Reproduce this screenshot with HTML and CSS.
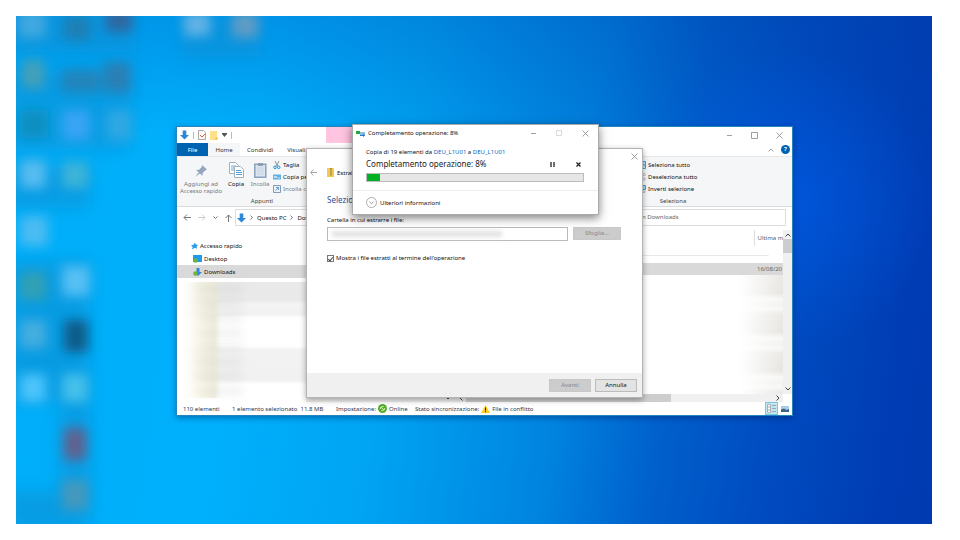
FILE: index.html
```html
<!DOCTYPE html>
<html lang="it">
<head>
<meta charset="utf-8">
<title>Desktop</title>
<link rel="stylesheet" href="styles.css">
</head>
<body>
<main class="desktop">
  <svg class="blobs" width="300" height="508" viewBox="0 0 300 508" aria-hidden="true">
    <defs>
      <filter id="soft" x="-20%" y="-20%" width="140%" height="140%"><feGaussianBlur stdDeviation="6"/></filter>
      <filter id="wide" x="-20%" y="-20%" width="140%" height="140%"><feGaussianBlur stdDeviation="9"/></filter>
    </defs>
    <g filter="url(#wide)" fill="#1090d4" opacity=".6">
      <rect x="-10" y="-10" width="130" height="46"/>
      <rect x="-10" y="54" width="128" height="34"/>
      <rect x="-10" y="90" width="124" height="44"/>
      <rect x="-10" y="150" width="84" height="42"/>
      <rect x="-10" y="245" width="84" height="140"/>
      <rect x="-10" y="475" width="84" height="40"/>
      <rect x="165" y="5" width="80" height="36"/>
      <rect x="44" y="385" width="30" height="100"/>
    </g>
    <g filter="url(#soft)">
      <rect x="2" y="-6" width="28" height="28" fill="#3fa8e0"/>
      <rect x="48" y="0" width="26" height="24" fill="#1d7fb4"/>
      <rect x="90" y="-8" width="26" height="24" fill="#2f68a0"/>
      <rect x="168" y="-4" width="26" height="24" fill="#62b2e4"/>
      <rect x="216" y="-4" width="26" height="26" fill="#5f9cc4"/>
      <rect x="6" y="44" width="22" height="28" fill="#45a0b8"/>
      <rect x="46" y="54" width="38" height="22" fill="#2384ba"/>
      <rect x="88" y="46" width="26" height="30" fill="#2a7fb4"/>
      <rect x="4" y="94" width="28" height="28" fill="#0d90c0"/>
      <rect x="46" y="94" width="28" height="30" fill="#38a4f4"/>
      <rect x="90" y="94" width="26" height="30" fill="#2ea8e4"/>
      <rect x="4" y="144" width="26" height="28" fill="#56bcf0"/>
      <rect x="46" y="146" width="26" height="26" fill="#3cb4d8"/>
      <rect x="4" y="200" width="28" height="30" fill="#4cbcf2"/>
      <rect x="4" y="256" width="26" height="28" fill="#32a0b4"/>
      <rect x="46" y="250" width="28" height="30" fill="#56c0f4"/>
      <rect x="4" y="304" width="26" height="28" fill="#44aee0"/>
      <rect x="48" y="304" width="24" height="32" fill="#0c5c88"/>
      <rect x="4" y="358" width="26" height="28" fill="#4cc4fc"/>
      <rect x="46" y="358" width="26" height="28" fill="#44c0ea"/>
      <rect x="48" y="412" width="22" height="32" fill="#62608c"/>
      <rect x="46" y="464" width="26" height="30" fill="#4498bc"/>
    </g>
  </svg>

  <section class="window explorer" aria-label="Downloads">
    <header class="titlebar">
      <div class="quick">
        <svg width="9" height="10" viewBox="0 0 10 10"><path d="M3 0h4v5h3L5 10 0 5h3z" fill="#2f88d6"/></svg>
        <i class="bar"></i>
        <svg width="8" height="10" viewBox="0 0 8 10"><path d="M.5.5h5l2 2v7h-7z" fill="#fafafa" stroke="#aaa"/><path d="M2 5l2 2 3-3" fill="none" stroke="#e06030"/></svg>
        <svg width="8" height="10" viewBox="0 0 8 10"><path d="M0 1h7v7h1v2H0z" fill="#ffe08a"/><path d="M7 7v2H5" fill="none" stroke="#f0bc40"/></svg>
        <svg width="5" height="4" viewBox="0 0 5 4"><path d="M0 0h5v1L2.500 4 0 1z" fill="#555"/></svg>
        <i class="bar"></i>
      </div>
      <div class="context-tab"></div>
      <div class="controls">
        <button aria-label="Riduci"><svg width="7" height="7" viewBox="0 0 7 7"><path d="M1 3.500h5"/></svg></button>
        <button aria-label="Ingrandisci"><svg width="7" height="7" viewBox="0 0 7 7"><path d="M.5.5h6v6h-6z"/></svg></button>
        <button aria-label="Chiudi"><svg width="7" height="7" viewBox="0 0 7 7"><path d="M.5.5l6 6M6.500.5l-6 6"/></svg></button>
      </div>
    </header>
    <nav class="tabs">
      <button class="file">File</button>
      <button class="active">Home</button>
      <button>Condividi</button>
      <button>Visualizza</button>
      <span class="help">
        <svg width="6" height="4" viewBox="0 0 6 4"><path d="M.5 3.500L3 1l2.500 2.500" fill="none" stroke="#888" stroke-width=".8"/></svg>
        <button class="round" aria-label="Guida">?</button>
      </span>
    </nav>
    <div class="ribbon">
      <div class="group clip">
        <div class="tools">
          <button class="big dim pin"><svg width="14" height="14" viewBox="0 0 14 14"><path d="M8 1l5 4.500-1.500.7-2.700 2.600-.3 3L5.800 9.500 1.200 13l3.500-4.700L2.200 6l3-.3L7.700 3z" fill="#93a6bd"/></svg><span>Aggiungi ad<br>Accesso rapido</span></button>
          <button class="big"><svg width="15" height="16" viewBox="0 0 15 16"><path d="M.5.5h6l3 3v8h-9z" fill="#fff" stroke="#a3afbb"/><path d="M2 4h5M2 6h5M2 8h5" stroke="#67a9d9"/><path d="M5.500 4.500h6l3 3v8h-9z" fill="#fff" stroke="#a3afbb"/><path d="M7 8.500h5M7 10.500h6M7 12.500h6" stroke="#4c9bd2"/></svg><span>Copia</span></button>
          <button class="big dim"><svg width="13" height="16" viewBox="0 0 13 16"><path d="M.8 2.200h11v13H.8z" fill="#dce5f0" stroke="#8ba2bd" stroke-width="1.500"/><path d="M4 1h5v3H4z" fill="#8d9fb3"/><path d="M3 6h7M3 8h7M3 10h7M3 12h7" stroke="#bac9da" stroke-width=".6"/></svg><span>Incolla</span></button>
          <ul class="small">
            <li><button><svg width="8" height="8" viewBox="0 0 8 8"><path d="M2 0l2.500 5M6 0L3.500 5" stroke="#777" stroke-width=".8"/><circle cx="2" cy="6.300" r="1.300" fill="none" stroke="#1f8fd8"/><circle cx="5.700" cy="6.300" r="1.300" fill="none" stroke="#1f8fd8"/></svg>Taglia</button></li>
            <li><button><svg width="8" height="8" viewBox="0 0 8 8"><path d="M0 1.500h8v5H0z" fill="#5fb0e4"/><path d="M1 3l1 2 1-2 1 2M5 5h2" fill="none" stroke="#fff" stroke-width=".7"/></svg>Copia percorso</button></li>
            <li><button class="dim"><svg width="8" height="8" viewBox="0 0 8 8"><path d="M.5.5h7v7h-7z" fill="#eaf1f8" stroke="#859bb5"/><path d="M2.500 5.500l3-3M3 2.500h2.500V5" fill="none" stroke="#4d87c4" stroke-width=".8"/></svg>Incolla collegamento</button></li>
          </ul>
        </div>
        <p>Appunti</p>
      </div>
      <div class="group select">
        <ul class="small">
          <li><button><svg width="8" height="8" viewBox="0 0 8 8"><path d="M.5.5h7v7h-7zM0 4h8M4 0v8" fill="#b6e0f7" stroke="#3fa0dc"/></svg>Seleziona tutto</button></li>
          <li><button><svg width="8" height="8" viewBox="0 0 8 8"><path d="M1 .5h2v2H1zM5 .5h2v2H5zM1 5h2v2H1zM5 5h2v2H5z" fill="#fff" stroke="#aaa" stroke-width=".7"/></svg>Deseleziona tutto</button></li>
          <li><button><svg width="8" height="8" viewBox="0 0 8 8"><path d="M4 .5h3.500v4H4z" fill="#9ed6f5" stroke="#3fa0dc"/><path d="M5 6h2v1.500H5z" fill="#fff" stroke="#aaa" stroke-width=".7"/></svg>Inverti selezione</button></li>
        </ul>
        <p>Seleziona</p>
      </div>
    </div>
    <div class="address">
      <svg width="8" height="7" viewBox="0 0 8 7"><path d="M8 3.500H1M4 .5l-3 3 3 3" class="ln"/></svg>
      <svg width="8" height="7" viewBox="0 0 8 7"><path d="M0 3.500h7M4 .5l3 3-3 3" class="ln faint"/></svg>
      <svg width="5" height="4" viewBox="0 0 5 4"><path d="M.5.500l2 2 2-2" class="ln"/></svg>
      <svg width="7" height="8" viewBox="0 0 7 8"><path d="M3.500 8V1M.5 4l3-3 3 3" class="ln"/></svg>
      <div class="crumbs">
        <svg width="9" height="10" viewBox="0 0 10 10"><path d="M3 0h4v5h3L5 10 0 5h3z" fill="#2f88d6"/></svg>
        <svg width="3" height="5" viewBox="0 0 3 5"><path d="M.5.5l2 2-2 2" class="ln"/></svg><a href="#">Questo PC</a><svg width="3" height="5" viewBox="0 0 3 5"><path d="M.5.5l2 2-2 2" class="ln"/></svg><a href="#">Downloads</a>
      </div>
      <div class="search">Cerca in Downloads</div>
    </div>
    <div class="content">
      <aside class="tree">
        <a href="#" class="root"><svg width="7" height="8" viewBox="0 0 8 8"><path d="M4.500 0L5.500 2.200 8 2.500 6.500 4.500 7 7 4.500 6 1 8l1-3L0 3l3-.5z" fill="#2a9be8"/></svg>Accesso rapido</a>
        <a href="#"><svg width="9" height="8" viewBox="0 0 9 8"><path d="M0 0h9v7H0z" fill="#1b9cf0"/><circle cx="2.500" cy="5.500" r="2.300" fill="#6cb33f"/></svg>Desktop</a>
        <a href="#" class="on"><svg width="9" height="8" viewBox="0 0 9 8"><path d="M3.500 0h3v4H9L5 8 1.500 4h2z" fill="#2f88d6"/><circle cx="2.500" cy="5.500" r="2.300" fill="#6cb33f"/></svg>Downloads</a>
        <div class="haze"><i></i><i></i><i></i><i></i><i></i><i></i><i></i><i></i></div>
      </aside>
      <div class="files">
        <table>
          <thead><tr><th></th><th class="date">Ultima m</th></tr></thead>
          <tbody>
            <tr class="gap"><td colspan="2"></td></tr>
            <tr class="on"><td></td><td class="date">16/08/20</td></tr>
          </tbody>
        </table>
        <div class="rowhaze"></div>
        <div class="hscroll">
          <svg class="down" width="6" height="4" viewBox="0 0 6 4"><path d="M.5.500L3 3l2.500-2.500" class="ln dark"/></svg>
          <svg width="4" height="6" viewBox="0 0 4 6"><path d="M3.500.5L1 3l2.500 2.500" class="ln dark"/></svg>
          <i></i>
          <svg width="4" height="6" viewBox="0 0 4 6"><path d="M.5.5L3 3 .5 5.500" class="ln dark"/></svg>
        </div>
      </div>
      <div class="vscroll">
        <svg width="6" height="4" viewBox="0 0 6 4"><path d="M.5 3.500L3 1l2.500 2.500" class="ln dark"/></svg>
        <i></i>
        <svg width="6" height="4" viewBox="0 0 6 4"><path d="M.5.500L3 3l2.500-2.500" class="ln dark"/></svg>
      </div>
    </div>
    <footer class="status">
      <span class="count">110 elementi</span>
      <span class="sel">1 elemento selezionato&nbsp; 11,8 MB</span>
      <span class="net">Impostazione:<svg width="9" height="9" viewBox="0 0 9 9"><circle cx="4.500" cy="4.500" r="4.500" fill="#55ad2e"/><path d="M2.300 5a2.300 2.300 0 0 1 3.500-2.200M6.700 4a2.300 2.300 0 0 1-3.500 2.200M3 3l3 3" fill="none" stroke="#e4f7c8" stroke-width=".9"/></svg>Online</span>
      <span class="sync">Stato sincronizzazione:<svg width="9" height="8" viewBox="0 0 9 8"><path d="M4.500 0L9 8H0z" fill="#ffcf1f"/><path d="M4.500 2.500v3M4.500 6.200v1" stroke="#222"/></svg>File in conflitto</span>
      <span class="views">
        <button class="on" aria-label="Dettagli"><svg width="9" height="9" viewBox="0 0 9 9"><path d="M.5.5h3v8h-3z" fill="#fff" stroke="#999" stroke-width=".7"/><path d="M.5 3h3M.5 6h3M5 1.500h4M5 4.500h4M5 7.500h4" stroke="#8a9aa4" stroke-width=".8"/></svg></button>
        <button aria-label="Icone grandi"><svg width="8" height="6" viewBox="0 0 8 6"><path d="M0 0h8v6H0z" fill="#a7cdec"/><path d="M0 6V3.500l3-1L5.500 4 8 3v3z" fill="#3c6484"/></svg></button>
      </span>
    </footer>
  </section>

  <section class="window wizard" aria-label="Estrai cartelle compresse">
    <header>
      <svg width="7" height="7" viewBox="0 0 7 7"><path d="M7 3.500H1M3.500.500l-3 3 3 3" fill="none" stroke="#aaa"/></svg>
      <svg class="zip" width="7" height="9" viewBox="0 0 7 9"><path d="M0 0h6l1 1v8H0z" fill="#f3c94f"/><path d="M4 0v8" stroke="#7d7460" stroke-width="1.500" stroke-dasharray="1 .6"/></svg>
      <span>Estrai</span>
      <button class="x" aria-label="Chiudi"><svg width="7" height="7" viewBox="0 0 7 7"><path d="M.5.5l6 6M6.500.5l-6 6"/></svg></button>
    </header>
    <div class="form">
      <h1>Selezio</h1>
      <label for="dest">Cartella in cui estrarre i file:</label>
      <div class="row">
        <span class="field"><input id="dest" type="text"><i></i></span>
        <button class="push off" disabled>Sfoglia...</button>
      </div>
      <label class="check"><input type="checkbox" checked>Mostra i file estratti al termine dell'operazione</label>
    </div>
    <footer><button class="push off" disabled>Avanti</button><button class="push">Annulla</button></footer>
  </section>

  <section class="window copy" aria-label="Completamento operazione">
    <header>
      <svg width="9" height="7" viewBox="0 0 9 7"><path d="M0 1h4v3H0z" fill="#22ac3c"/><path d="M4 2h5v4H4z" fill="#8bbce4"/><path d="M4 5h3V3.500L9 5.500 7 7V6H4z" fill="#2378c8"/></svg>
      <span>Completamento operazione: 8%</span>
      <div class="controls">
        <button aria-label="Riduci"><svg width="7" height="7" viewBox="0 0 7 7"><path d="M1 3.500h5"/></svg></button>
        <button class="faded" aria-label="Ingrandisci" disabled><svg width="7" height="7" viewBox="0 0 7 7"><path d="M.5.5h5v5h-5z"/></svg></button>
        <button aria-label="Chiudi"><svg width="7" height="7" viewBox="0 0 7 7"><path d="M.5.5l6 6M6.500.5l-6 6"/></svg></button>
      </div>
    </header>
    <div class="progress">
      <p>Copia di 19 elementi da <a href="#">DEU_L1U01</a> a <a href="#">DEU_L1U01</a></p>
      <div class="line">
        <h2>Completamento operazione: 8%</h2>
        <button aria-label="Pausa"><svg width="5" height="5" viewBox="0 0 5 5"><path d="M1 0v5M4 0v5" stroke="#222" stroke-width="1.300"/></svg></button>
        <button aria-label="Annulla"><svg width="5" height="5" viewBox="0 0 5 5"><path d="M.5.500l4 4M4.500.5l-4 4" stroke="#222" stroke-width="1.300"/></svg></button>
      </div>
      <div class="meter" role="progressbar" aria-valuenow="8"><i></i></div>
    </div>
    <button class="more"><svg width="11" height="11" viewBox="0 0 11 11"><circle cx="5.500" cy="5.500" r="5" fill="#fff" stroke="#999" stroke-width=".8"/><path d="M3.300 4.700l2.200 2 2.200-2" fill="none" stroke="#888" stroke-width=".8"/></svg>Ulteriori informazioni</button>
  </section>
</main>
</body>
</html>
```
FILE: styles.css
```css
* { box-sizing: border-box; }
body { margin: 0; background: #fff; font: 6px/10px "Noto Sans", "Open Sans", sans-serif; color: #111; }
button { font: inherit; color: inherit; background: none; border: 0; padding: 0; margin: 0; white-space: nowrap; }
a { color: inherit; text-decoration: none; }
p, h1, h2, ul { margin: 0; padding: 0; font-weight: 400; }
ul { list-style: none; }
svg { display: block; flex: none; }

.desktop {
  position: relative;
  margin: 16px 28px 16px 16px;
  height: calc(100vh - 32px);
  overflow: hidden;
  background:
    radial-gradient(circle at 84% 36%, rgba(0, 92, 236, .6), rgba(0, 80, 220, 0) 18%),
    linear-gradient(188deg, rgba(0, 60, 170, .42), rgba(0, 80, 200, 0) 36%),
    linear-gradient(98deg, #00aef8 0%, #00b0fc 26%, #00a4f2 42%, #0084e0 60%, #0060cc 71%, #004cc0 82%, #003cb4 95%, #003ab0 100%);
}
.blobs { position: absolute; left: 0; top: 0; }
.window { position: absolute; display: flex; flex-direction: column; background: #fff; }
.ln { fill: none; stroke: #777; stroke-width: 1; }
.faint { stroke: #ccc; }
.dark { stroke: #444; }

.controls { margin-left: auto; display: flex; align-items: center; }
.controls button { width: 26px; display: flex; justify-content: center; }
.controls svg, .x svg { fill: none; stroke: #888; stroke-width: .8; }
.controls .faded { opacity: .4; }

/* File explorer */
.explorer { left: 160px; top: 110px; width: 617px; height: 290px; border: 1px solid #2485be; box-shadow: 0 2px 6px rgba(0, 20, 80, .4); }
.explorer .controls button { width: 25px; }
.titlebar { display: flex; height: 16px; flex: none; }
.quick { display: flex; align-items: center; gap: 4px; width: 149px; padding-left: 3px; }
.bar { width: 1px; height: 7px; background: #bbb; }
.context-tab { width: 60px; background: #ffc4df; }
.tabs { display: flex; height: 13px; flex: none; line-height: 12px; }
.tabs > button { padding: 0 7px; color: #333; }
.tabs .file { width: 31px; background: #0063b1; color: #fff; }
.tabs .active { background: #f5f6f7; width: 32px; padding: 0; }
.help { margin-left: auto; display: flex; align-items: center; gap: 7px; padding-right: 2px; }
.round { width: 9px; height: 9px; line-height: 9px; border-radius: 50%; background: #0063b1; color: #fff; font-weight: 700; }
.ribbon { display: flex; justify-content: space-between; height: 51px; flex: none; background: #f5f6f7; border-top: 1px solid #e6e8ea; border-bottom: 1px solid #dadbdc; }
.group { display: flex; flex-direction: column; justify-content: space-between; padding: 3px 0 0; }
.group p { text-align: center; color: #444; }
.clip { width: 170px; overflow: hidden; }
.tools { display: flex; }
.big { display: flex; flex-direction: column; align-items: center; gap: 3px; line-height: 7px; width: 24px; padding-top: 2px; }
.pin { width: 47px; padding-left: 1px; padding-top: 4px; }
.dim { color: #777; }
.small { display: flex; flex-direction: column; gap: 2px; }
.tools .small { margin-left: 1px; }
.small button { display: flex; align-items: center; gap: 2px; }
.select { width: 154px; }
.select p { width: 64px; padding-left: 6px; }
.address { display: flex; align-items: center; gap: 7px; height: 23px; flex: none; padding: 0 6px 2px 6px; }
.crumbs { display: flex; align-items: center; gap: 4px; height: 17px; flex: 1; border: 1px solid #ddd; padding: 0 1px; margin-left: -4px; }
.search { height: 17px; line-height: 15px; width: 172px; border: 1px solid #ddd; color: #666; padding-left: 8px; }
.content { display: flex; flex: 1; min-height: 0; }
.tree { width: 129px; padding: 9px 0 0; }
.tree a { display: flex; align-items: center; gap: 2px; height: 13px; padding-left: 16px; }
.tree .root { padding-left: 14px; }
.tree .on, tr.on { background: #d9d9d9; }
.haze { margin: 4px 0 0 6px; height: 116px; display: flex; flex-direction: column; justify-content: space-around; background: linear-gradient(90deg, #fff, rgba(248, 245, 224, .7) 18px, rgba(238, 235, 216, .8) 31px, rgba(255, 255, 255, 0) 38px), linear-gradient(180deg, #e9e9e9 0, #e9e9e9 18px, #f4f4f4 22px, #f1f1f1 32px, #fff 36px, #fff 64px, #f2f2f2 68px, #f1f1f1 98px, #fff 102px); }
.haze i { height: 4px; width: 46px; margin-left: 14px; background: #aaa; opacity: .3; filter: blur(4px); }
.files { flex: 1; min-width: 0; display: flex; flex-direction: column; }
table { width: 100%; table-layout: fixed; border-collapse: collapse; }
th, td { padding: 0; font-weight: 400; text-align: left; height: 12px; white-space: nowrap; }
thead th { height: 16px; color: #4d5b70; }
.date { width: 29px; padding-left: 3px; }
th.date { border-left: 1px solid #ddd; }
td.date { color: #666; }
.gap td { height: 17px; background: linear-gradient(#e8e8e8, #e8e8e8) 0 9px / 97% 1px no-repeat; }
.rowhaze { flex: 1; background: linear-gradient(90deg, rgba(255, 255, 255, 1) 91%, rgba(255, 255, 255, 0)), repeating-linear-gradient(180deg, #eae9e6 0, #e6e5e1 18px, #f8f8f7 24px, #f2f1ef 30px, #f8f8f6 34px, #eae9e6 39px); }
.hscroll { display: flex; align-items: center; gap: 3px; height: 8px; background: #f0f0f0; padding: 0 3px 0 139px; }
.down { margin-right: 5px; }
.hscroll i { width: 205px; height: 8px; background: #cdcdcd; margin-right: auto; }
.vscroll { width: 9px; margin-bottom: 8px; background: #f0f0f0; display: flex; flex-direction: column; align-items: center; padding: 3px 0; gap: 2px; }
.vscroll i { width: 9px; height: 14px; background: #cdcdcd; margin-bottom: auto; }
.status { display: flex; align-items: center; height: 13px; flex: none; padding-left: 6px; color: #2a3954; white-space: nowrap; }
.status span { display: flex; align-items: center; gap: 2px; }
.count { width: 49px; }
.sel { width: 104px; }
.net { width: 79px; }
.status .views { margin-left: auto; gap: 3px; padding-right: 3px; }
.views button { display: flex; align-items: center; }
.views .on { width: 13px; height: 13px; justify-content: center; background: #bfe6f2; border: 1px solid #7cc6de; }

/* Extraction wizard */
.wizard { left: 290px; top: 132px; width: 337px; height: 250px; border: 1px solid #b4b4b4; box-shadow: 0 2px 6px rgba(0, 0, 0, .35); }
.wizard header { display: flex; align-items: flex-start; padding: 4px 4px 0 3px; height: 42px; }
.wizard header > span { margin-top: 15px; }
.wizard header > svg { margin-top: 16px; }
.wizard header > .zip { margin: 15px 3px 0 10px; }
.x { margin-left: auto; }
.form { padding: 2px 21px 0 20px; flex: 1; display: flex; flex-direction: column; align-items: stretch; }
.form h1 { font-size: 8px; line-height: 13px; color: #1e4e9c; margin-bottom: 9px; }
.row { display: flex; justify-content: space-between; margin: 2px 0 12px; }
.field { display: flex; position: relative; width: 241px; height: 14px; }
.field input { width: 100%; border: 1px solid #bbb; padding: 0 3px; font: inherit; }
.field i { position: absolute; left: 5px; top: 4px; width: 170px; height: 6px; background: #e2e2e2; filter: blur(2px); }
.push { width: 42px; height: 13px; border: 1px solid #bbb; background: #e3e3e3; color: #111; line-height: 11px; }
.row .push { width: 48px; }
.off { background: #ccc; border-color: #c8c8c8; color: #888; }
.check { display: flex; align-items: center; gap: 2px; }
.check input { appearance: none; display: flex; justify-content: center; width: 7px; height: 7px; margin: 0; border: 1px solid #777; }
.check input:checked::after { content: ""; width: 2px; height: 4px; border: solid #444; border-width: 0 1px 1px 0; transform: rotate(40deg); }
.wizard footer { display: flex; justify-content: flex-end; align-items: center; gap: 4px; height: 24px; padding-right: 5px; background: #f0f0f0; }

/* Copy progress */
.copy { left: 336px; top: 108px; width: 247px; height: 91px; border: 1px solid #aaa; box-shadow: 0 3px 9px rgba(0, 0, 0, .5); }
.copy header { display: flex; align-items: center; gap: 3px; height: 16px; padding-left: 3px; }
.progress { padding: 6px 14px 0 13px; height: 50px; border-bottom: 1px solid #eee; }
.progress a { color: #0066bf; }
.line { display: flex; align-items: center; height: 14px; }
.line h2 { font-size: 8px; flex: 1; color: #222; }
.line button { display: flex; width: 5px; margin-left: 21px; }
.line button:last-child { margin-right: 3px; }
.meter { height: 9px; margin-top: 2px; border: 1px solid #bcbcbc; background: #e6e6e6; }
.meter i { display: block; width: 6%; height: 100%; background: #06b025; }
.more { display: flex; align-items: center; gap: 3px; padding: 0 13px; flex: 1; }
```
